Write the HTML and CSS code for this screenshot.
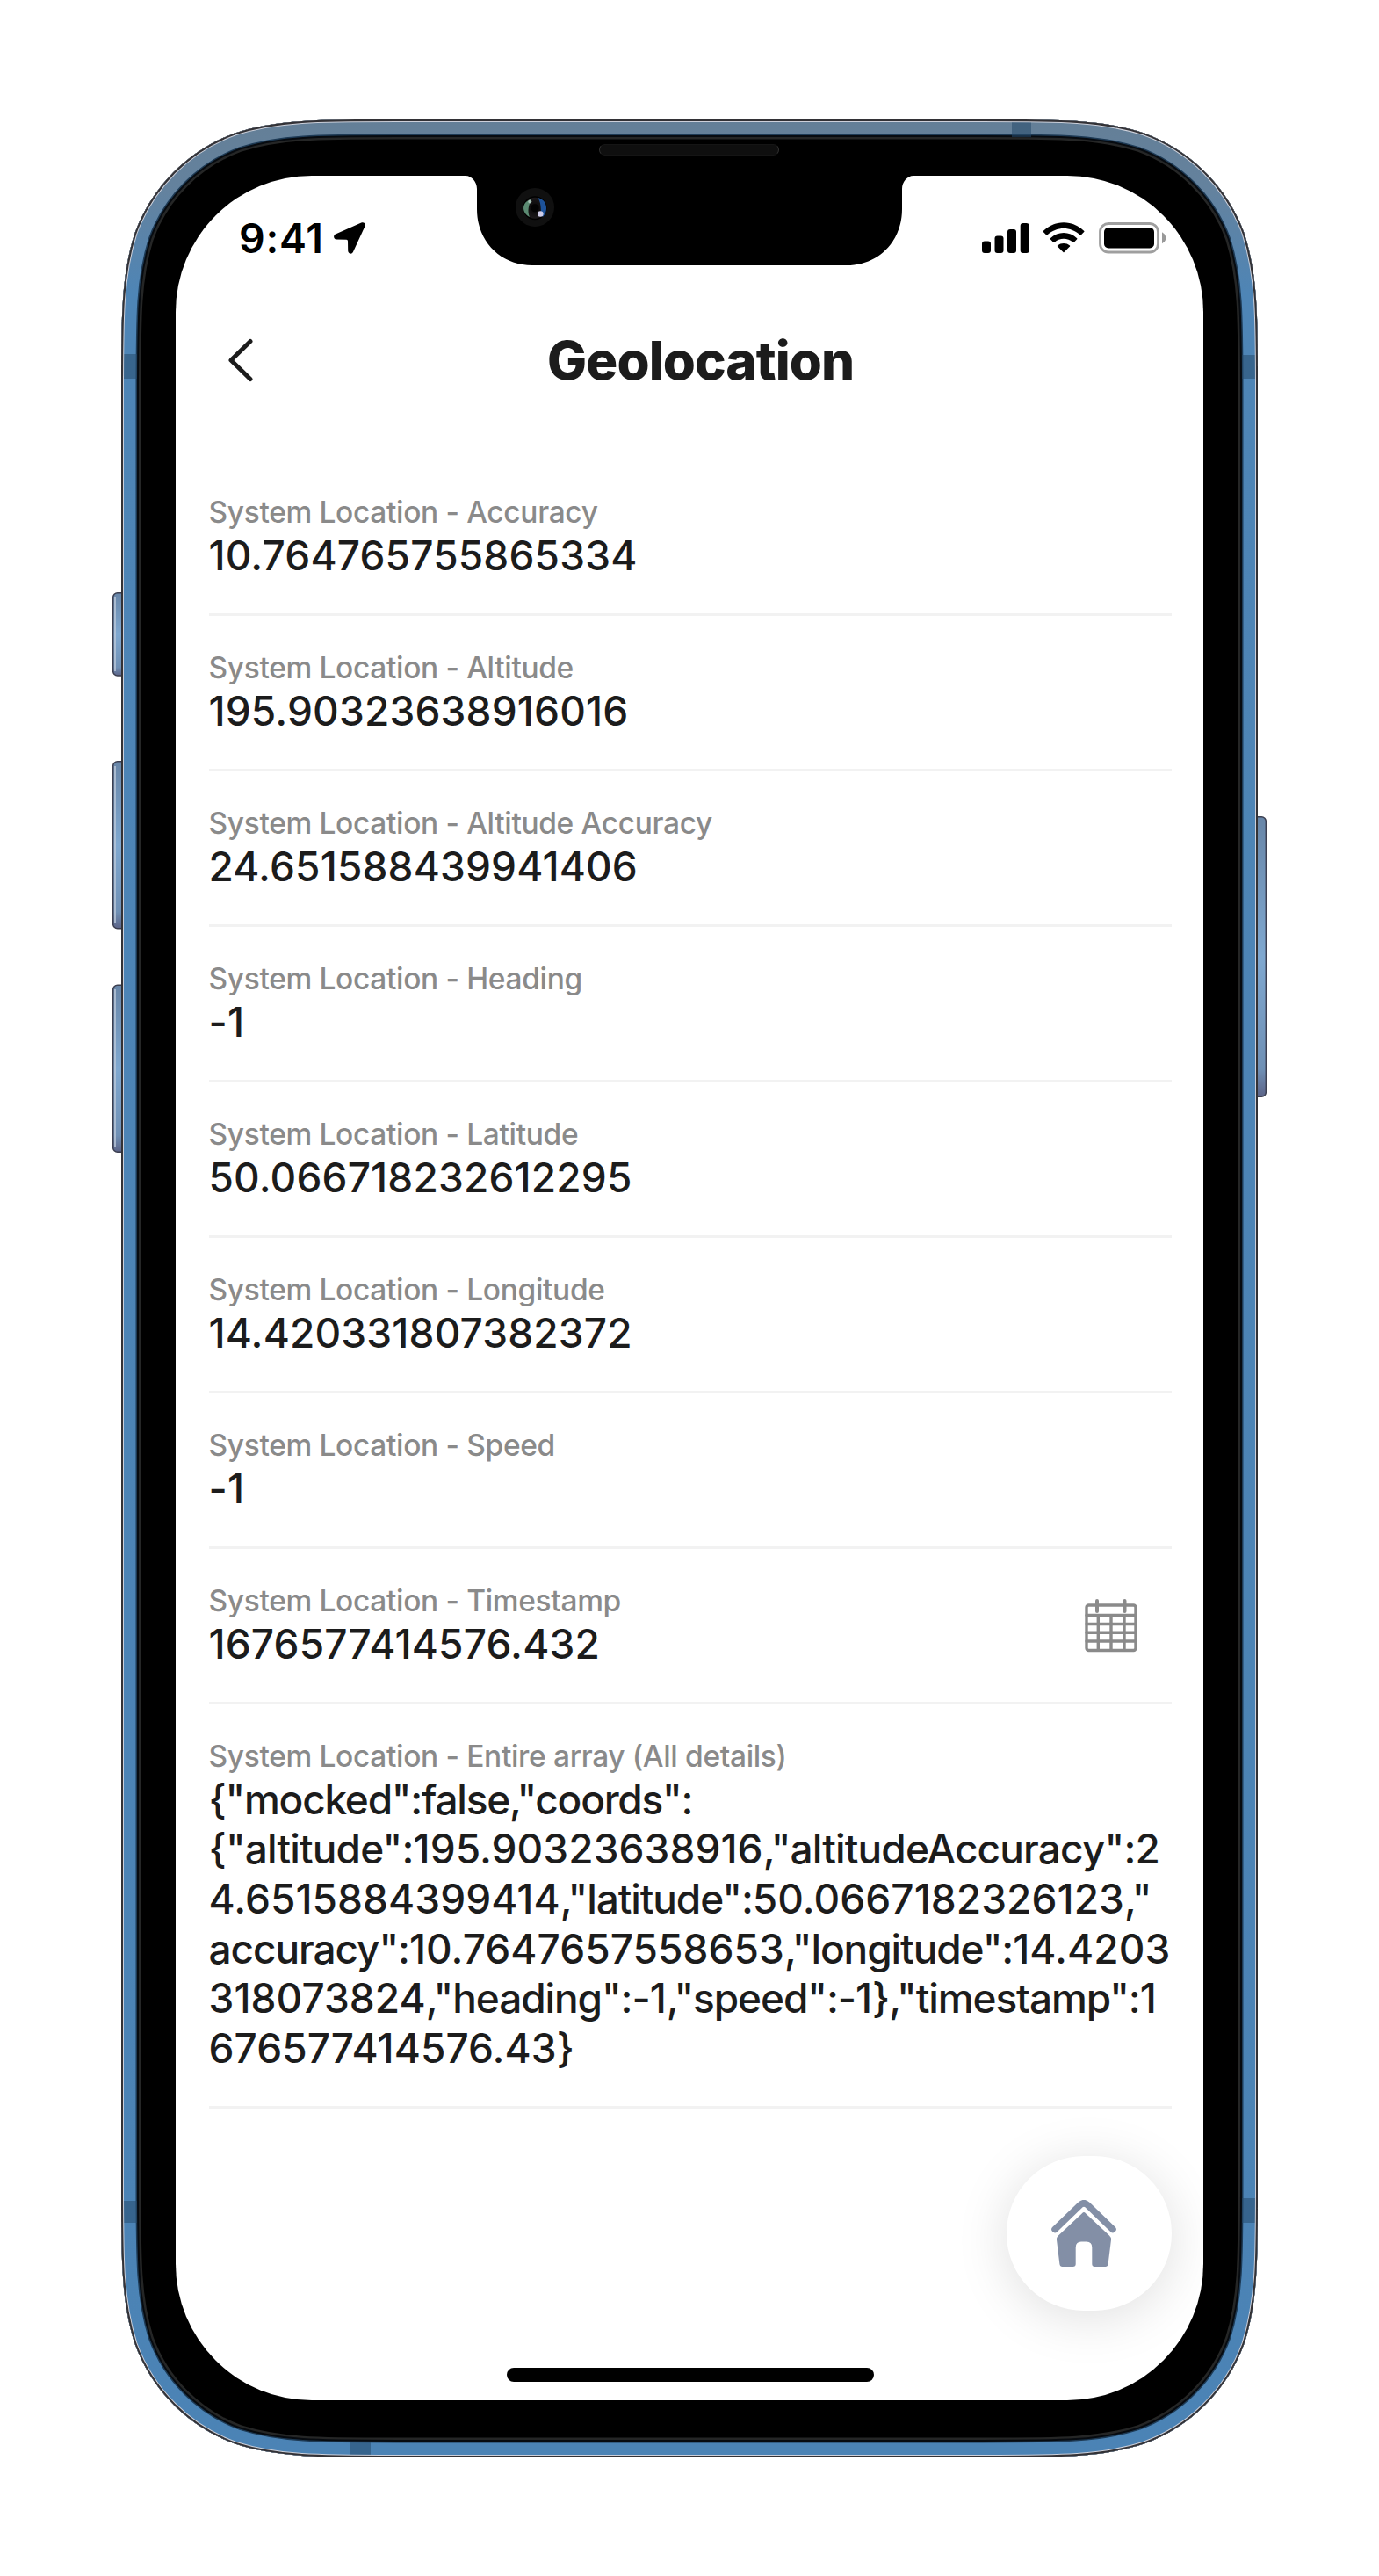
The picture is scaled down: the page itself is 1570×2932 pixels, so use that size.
FILE: index.html
```html
<!DOCTYPE html>
<html lang="en">
<head>
<meta charset="utf-8">
<title>Geolocation</title>
<link rel="stylesheet" href="styles.css">
</head>
<body>
<main class="device">
  <svg class="frame" viewBox="128 136 1314 2661" aria-hidden="true">
    <defs>
      <path id="body" d="M451.4,136 H1118.6 C1208.9,136 1254,136 1302.5,151.4 C1355.6,170.7 1397.3,212.4 1416.6,265.5 C1432,314 1432,359.1 1432,449.4 V2483.6 C1432,2573.9 1432,2619 1416.6,2667.5 C1397.3,2720.6 1355.6,2762.3 1302.5,2781.6 C1254,2797 1208.9,2797 1118.6,2797 H451.4 C361.1,2797 316,2797 267.5,2781.6 C214.4,2762.3 172.7,2720.6 153.4,2667.5 C138,2619 138,2573.9 138,2483.6 V449.4 C138,359.1 138,314 153.4,265.5 C172.7,212.4 214.4,170.7 267.5,151.4 C316,136 361.1,136 451.4,136Z"/>
      <clipPath id="bodyClip"><use href="#body"/></clipPath>
      <linearGradient id="metal" gradientUnits="userSpaceOnUse" x1="0" y1="136" x2="0" y2="2797">
        <stop offset="0" stop-color="#647f97"/>
        <stop offset=".03" stop-color="#64829e"/>
        <stop offset=".075" stop-color="#4e85b6"/>
        <stop offset="1" stop-color="#4b83b5"/>
      </linearGradient>
      <linearGradient id="key" x1="0" y1="0" x2="0" y2="1">
        <stop offset="0" stop-color="#6886a8"/>
        <stop offset=".5" stop-color="#7fa8d0"/>
        <stop offset=".9" stop-color="#6f90b5"/>
        <stop offset="1" stop-color="#5c6488"/>
      </linearGradient>
      <radialGradient id="lens"><stop offset="0" stop-color="#050505"/><stop offset="1" stop-color="#1c191b"/></radialGradient>
    </defs>
    <g fill="url(#key)" stroke="#3c3f50" stroke-width="1.5">
      <rect x="128.7" y="674.7" width="20" height="94.300" rx="5"/>
      <rect x="128.7" y="866.7" width="20" height="190" rx="5"/>
      <rect x="128.7" y="1121.200" width="20" height="190" rx="5"/>
      <rect x="1421.3" y="929.7" width="20" height="318.6" rx="5"/>
    </g>
    <path d="M131,679V764M131,872V1051M131,1126V1306" stroke="#b9c6d8" stroke-width="1.6"/>
    <g clip-path="url(#bodyClip)">
      <use href="#body"/>
      <g fill="none">
        <use href="#body" stroke="#252626" stroke-width="45"/>
        <use href="#body" stroke="#070b10" stroke-width="40"/>
        <use href="#body" stroke="#1d3a55" stroke-width="36"/>
        <use href="#body" stroke="url(#metal)" stroke-width="33"/>
      </g>
      <path fill="#274a6b" fill-opacity=".55" d="M141,403h15v28h-15zM1414,404h15v27h-15zM1152,139h22v17h-22zM141,2505h15v25h-15zM1414,2502h15v28h-15zM398,2779h24v15h-24z"/>
      <g fill="none">
        <use href="#body" stroke="#cdd0da" stroke-width="6"/>
        <use href="#body" stroke="#333236" stroke-width="4"/>
      </g>
    </g>
  </svg>

  <section class="screen">
    <svg class="notch" viewBox="0 -2 510 104" aria-hidden="true">
      <path d="M0,-2V0C7,0 13,7 13,15V38C13,75 40,102 76,102H434C470,102 497,75 497,38V15C497,7 503,0 510,0V-2Z"/>
    </svg>
    <svg class="camera" viewBox="0 0 44 44" aria-hidden="true">
      <circle cx="22" cy="22" r="22" fill="#101010"/>
      <circle cx="22" cy="22.700" r="13.500" fill="#010101"/>
      <circle cx="22" cy="22.700" r="12" fill="url(#lens)"/>
      <path d="M18 13C7 15 6 28 16 33C13 26 15 19 18 13Z" fill="#5b8a72"/>
      <path d="M25 11C36 13 38 26 31 33C27 30 31 18 25 11Z" fill="#1d5299"/>
      <circle cx="22" cy="22.700" r="4.500" fill="#030303"/>
      <circle cx="16.300" cy="15.500" r="2" fill="#a8c2b6"/>
      <circle cx="28.300" cy="29.500" r="3.300" fill="#cfcde8"/>
    </svg>
    <span class="speaker"></span>

    <header class="status">
      <span class="time">9:41</span>
      <svg class="arrow" viewBox="0 0 36 36" aria-hidden="true"><path d="M31.300 .5L2 13.500C-1 15-.3 19.500 3 19.600L14.500 19.800Q16 19.900 16 21.500L16.200 32.500C16.300 36 20.700 36.800 22 33.800L35.400 4.800C36.800 1.800 34.300-.8 31.300 .5Z"/></svg>
      <svg class="signal" viewBox="0 0 54 34" aria-hidden="true"><rect y="20.500" width="10" height="13.500" rx="3"/><rect x="14.500" y="14.500" width="10" height="19.500" rx="3"/><rect x="29" y="7" width="10" height="27" rx="3"/><rect x="43.700" width="10" height="34" rx="3"/></svg>
      <svg class="wifi" viewBox="0 0 48 36" aria-hidden="true">
        <path d="M.7 10C14-3 34-3 47.300 10Q47.700 10.500 47.200 11L43.700 14.500Q43.200 15 42.700 14.500C32 4.500 16 4.500 5.300 14.500Q4.800 15 4.300 14.500L.8 11Q.3 10.500 .7 10Z"/>
        <path d="M8.800 18.300C17.500 10 30.500 10 39.200 18.300Q39.700 18.800 39.200 19.300L35.600 22.900Q35.100 23.300 34.600 22.900C28.500 17.500 19.500 17.500 13.400 22.900Q12.900 23.300 12.400 22.900L8.800 19.300Q8.300 18.800 8.800 18.300Z"/>
        <path d="M17 26.500C21 23.200 27 23.200 31 26.500Q31.500 27 31 27.500L24.500 34Q24 34.500 23.500 34L17 27.500Q16.500 27 17 26.500Z"/>
      </svg>
      <svg class="battery" viewBox="0 0 76 36" aria-hidden="true"><rect x="1.500" y="1.500" width="66" height="32.500" rx="9.500" fill="none" stroke="#9f9f9f" stroke-width="2.800"/><rect x="6" y="6" width="57" height="23.500" rx="5"/><path d="M72 11.300Q76.300 13.500 76.300 17.800T72 24.300Z" fill="#999"/></svg>
    </header>

    <nav class="titlebar">
      <svg class="back" viewBox="0 0 30 50" aria-hidden="true"><path d="M26 3.500L4 25L26 46.500" fill="none" stroke="#1c1c1c" stroke-width="5" stroke-linecap="round" stroke-linejoin="round"/></svg>
      <h1 class="title">Geolocation</h1>
    </nav>

    <div class="list">
      <div class="row"><div class="label">System Location - Accuracy</div><div class="value">10.764765755865334</div></div>
      <div class="row"><div class="label">System Location - Altitude</div><div class="value">195.90323638916016</div></div>
      <div class="row"><div class="label">System Location - Altitude Accuracy</div><div class="value">24.651588439941406</div></div>
      <div class="row"><div class="label">System Location - Heading</div><div class="value">-1</div></div>
      <div class="row"><div class="label">System Location - Latitude</div><div class="value">50.066718232612295</div></div>
      <div class="row"><div class="label">System Location - Longitude</div><div class="value">14.420331807382372</div></div>
      <div class="row"><div class="label">System Location - Speed</div><div class="value">-1</div></div>
      <div class="row row-icon">
        <div><div class="label">System Location - Timestamp</div><div class="value">1676577414576.432</div></div>
        <svg class="calendar" viewBox="0 0 60 61" fill="none" stroke="#8a8a8a" stroke-width="3.400" stroke-linecap="round" aria-hidden="true"><rect x="2" y="7" width="56" height="51.500" rx="2.500"/><path d="M2 18.500H58M2 28.500H58M2 38.200H58M2 48H58M15.300 19V58M30 19V58M45 19V58"/><path d="M14 2V14M45.500 2V14" stroke-width="4"/></svg>
      </div>
      <div class="row"><div class="label">System Location - Entire array (All details)</div><div class="value value-json"><span class="key key-tight">{"mocked":false,"coords":</span><br><span class="key key-loose">{"altitude":</span>195.90323638916<span class="key key-loose">,"altitudeAccuracy":</span>2<br>4.6515884399414<span class="key">,"latitude":</span>50.0667182326123<span class="key">,"</span><br><span class="key">accuracy":</span>10.7647657558653<span class="key">,"longitude":</span>14.4203<br>318073824<span class="key">,"heading":-</span>1<span class="key">,"speed":-</span>1<span class="key">},"timestamp":</span>1<br>676577414576.43}</div></div>
    </div>

    <div class="fab">
      <svg class="home" viewBox="0 0 74 76" fill="#838fa6" aria-hidden="true">
        <path d="M4 33.500L33 5.500Q37 2 41 5.500L70 33.500" fill="none" stroke="#838fa6" stroke-width="7.500" stroke-linecap="round"/>
        <path d="M35 15.200Q37 13 39 15.200L66 40.500Q68.300 42.700 68 45.500L64.600 73Q64.200 76 61.500 76H49.500Q46.300 76 46.300 73V54Q46.300 47.500 40 47.500H34Q27.700 47.500 27.700 54V73Q27.700 76 24.500 76H12.500Q9.800 76 9.400 73L6 45.500Q5.700 42.700 8 40.500Z"/>
      </svg>
    </div>
    <span class="home-bar"></span>
  </section>
</main>
</body>
</html>
```
FILE: styles.css
```css
body {
  margin: 0;
  background: #fff;
  font-family: Inter, "Liberation Sans", sans-serif;
}

.device {
  position: relative;
  box-sizing: border-box;
  width: 1294px;
  height: 2661px;
  margin: 136px 138px 135px;
  padding: 64px 62px 65px;
}

.frame {
  position: absolute;
  left: -10px;
  top: 0;
  width: 1314px;
  height: 2661px;
}

.screen {
  position: relative;
  height: 2532px;
  border-radius: 155px;
  background: #fff;
  display: flex;
  flex-direction: column;
}

.notch {
  position: absolute;
  left: 330px;
  top: -2px;
  width: 510px;
  height: 104px;
}

.camera {
  position: absolute;
  left: 387px;
  top: 14px;
  width: 44px;
  height: 44px;
}

.speaker {
  position: absolute;
  left: 482px;
  top: -36px;
  width: 205px;
  height: 13px;
  box-sizing: border-box;
  border: 1px solid #151515;
  border-left-color: #333;
  border-right-color: #333;
  border-radius: 7px;
  background: #0f0f0f;
}

.status {
  display: flex;
  height: 89px;
  box-sizing: border-box;
  padding: 53px 0 0 71px;
  align-items: flex-start;
}

.time {
  box-sizing: border-box;
  width: 109px;
  padding-left: 1px;
  font-size: 46.500px;
  font-weight: 560;
  letter-spacing: 0.7px;
  line-height: 36px;
  white-space: nowrap;
}

.arrow { width: 36px; height: 36px; }
.signal { width: 54px; height: 34px; margin: 1px 0 0 702px; }
.wifi { width: 48px; height: 36px; margin-left: 14.500px; }
.battery { width: 76px; height: 36px; margin-left: 16px; }

.titlebar {
  display: flex;
  align-items: center;
  height: 130px;
  margin-top: 56px;
  padding-left: 59px;
}

.back { width: 30px; height: 50px; }

.title {
  margin: 0 0 0 334px;
  font-size: 60px;
  font-weight: 800;
  letter-spacing: -0.9px;
  line-height: 72px;
  color: #1c1c1c;
}

.list {
  margin: 49px 36.500px 0 37.500px;
}

.row {
  padding: 38px 0 37.400px;
  border-bottom: 3px solid #f2f2f2;
}

.row-icon {
  display: flex;
  justify-content: space-between;
}

.label {
  font-size: 33.500px;
  font-weight: 460;
  letter-spacing: -0.34px;
  line-height: 42px;
  color: #8a8a8a;
  white-space: nowrap;
}

.value {
  font-size: 46px;
  font-weight: 475;
  letter-spacing: 0.15px;
  line-height: 56.600px;
  color: #1c1c1c;
  white-space: nowrap;
}

.value-json { letter-spacing: 0.05px; }
.key { letter-spacing: -1.100px; }
.key-tight { letter-spacing: -1.250px; }
.key-loose { letter-spacing: -0.860px; }

.calendar {
  width: 60px;
  height: 61px;
  margin: 19px 38.500px 0 0;
}

.fab {
  position: absolute;
  left: 946px;
  top: 2254px;
  width: 188px;
  height: 176px;
  box-sizing: border-box;
  padding: 50px 0 0 51px;
  border-radius: 88px;
  background: #fff;
  box-shadow: 0 8px 60px rgba(0, 0, 0, 0.13);
}

.home { display: block; width: 74px; height: 76px; }

.home-bar {
  position: absolute;
  left: 376.500px;
  top: 2495px;
  width: 418.500px;
  height: 16px;
  border-radius: 8px;
  background: #000;
}
```
